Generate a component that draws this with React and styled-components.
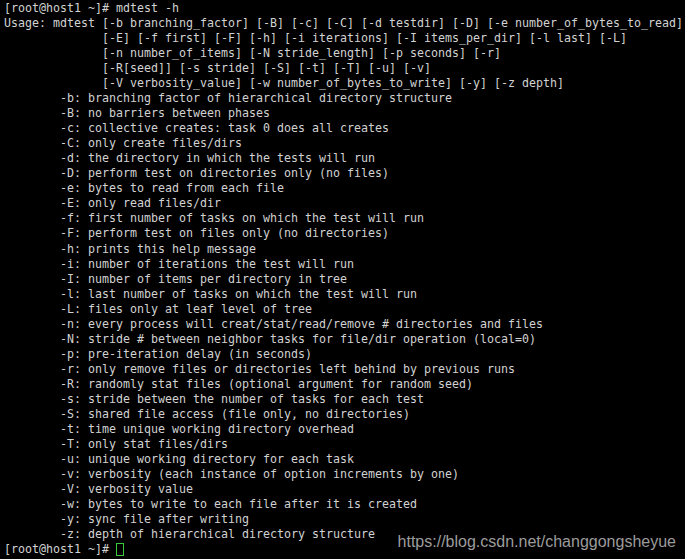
import React from "react";
import styled, { createGlobalStyle } from "styled-components";

const GlobalStyle = createGlobalStyle`
  html, body {
    margin: 0;
    padding: 0;
    background: #000000;
  }
`;

const usage = [
  "Usage: mdtest [-b branching_factor] [-B] [-c] [-C] [-d testdir] [-D] [-e number_of_bytes_to_read]",
  "              [-E] [-f first] [-F] [-h] [-i iterations] [-I items_per_dir] [-l last] [-L]",
  "              [-n number_of_items] [-N stride_length] [-p seconds] [-r]",
  "              [-R[seed]] [-s stride] [-S] [-t] [-T] [-u] [-v]",
  "              [-V verbosity_value] [-w number_of_bytes_to_write] [-y] [-z depth]",
];

const options = [
  ["-b", "branching factor of hierarchical directory structure"],
  ["-B", "no barriers between phases"],
  ["-c", "collective creates: task 0 does all creates"],
  ["-C", "only create files/dirs"],
  ["-d", "the directory in which the tests will run"],
  ["-D", "perform test on directories only (no files)"],
  ["-e", "bytes to read from each file"],
  ["-E", "only read files/dir"],
  ["-f", "first number of tasks on which the test will run"],
  ["-F", "perform test on files only (no directories)"],
  ["-h", "prints this help message"],
  ["-i", "number of iterations the test will run"],
  ["-I", "number of items per directory in tree"],
  ["-l", "last number of tasks on which the test will run"],
  ["-L", "files only at leaf level of tree"],
  ["-n", "every process will creat/stat/read/remove # directories and files"],
  ["-N", "stride # between neighbor tasks for file/dir operation (local=0)"],
  ["-p", "pre-iteration delay (in seconds)"],
  ["-r", "only remove files or directories left behind by previous runs"],
  ["-R", "randomly stat files (optional argument for random seed)"],
  ["-s", "stride between the number of tasks for each test"],
  ["-S", "shared file access (file only, no directories)"],
  ["-t", "time unique working directory overhead"],
  ["-T", "only stat files/dirs"],
  ["-u", "unique working directory for each task"],
  ["-v", "verbosity (each instance of option increments by one)"],
  ["-V", "verbosity value"],
  ["-w", "bytes to write to each file after it is created"],
  ["-y", "sync file after writing"],
  ["-z", "depth of hierarchical directory structure"],
];

export default function App() {
  return (
    <>
      <GlobalStyle />
      <Terminal>
        <Line>[root@host1 ~]# mdtest -h</Line>
        {usage.map((l, i) => (
          <Line key={"u" + i}>{l}</Line>
        ))}
        {options.map(([flag, text]) => (
          <Line key={flag}>{"        " + flag + ": " + text}</Line>
        ))}
        <Line>
          {"[root@host1 ~]# "}
          <Cursor />
        </Line>
        <Watermark>https://blog.csdn.net/changgongsheyue</Watermark>
      </Terminal>
    </>
  );
}

const Terminal = styled.div`
  position: relative;
  width: 685px;
  height: 559px;
  box-sizing: border-box;
  padding: 1px 4px 0 4px;
  background: #000000;
  color: #d2d2d2;
  font-family: "DejaVu Sans Mono", "Liberation Mono", monospace;
  font-size: 11.64px;
  line-height: 15.03px;
  overflow: hidden;
`;

const Line = styled.div`
  white-space: pre;
`;

const Cursor = styled.span`
  display: inline-block;
  width: 8px;
  height: 13px;
  box-sizing: border-box;
  border: 1px solid #3cc83c;
  vertical-align: -3px;
`;

const Watermark = styled.div`
  position: absolute;
  right: 9px;
  bottom: 10px;
  font-family: "Liberation Sans", Arial, sans-serif;
  font-size: 16px;
  color: #9c9c9c;
  white-space: nowrap;
`;
